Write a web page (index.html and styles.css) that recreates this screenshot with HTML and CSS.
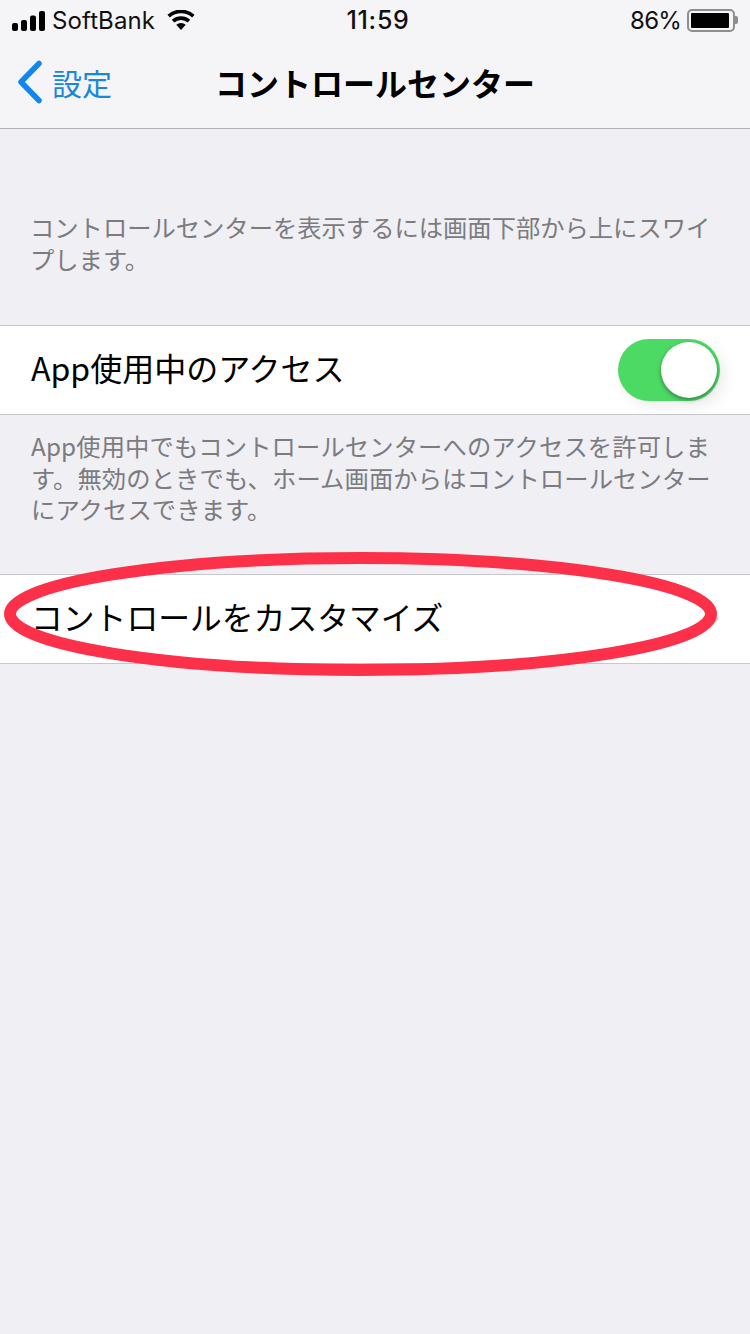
FILE: index.html
```html
<!DOCTYPE html>
<html lang="ja">
<head>
<meta charset="utf-8">
<title>コントロールセンター</title>
<link rel="stylesheet" href="styles.css">
</head>
<body>
<div class="screen">
  <header class="top">
    <div class="status">
      <div class="status-left">
        <svg class="signal" viewBox="0 0 34 20"><rect x="0" y="12" width="6" height="8" rx="2"/><rect x="9" y="9" width="6" height="11" rx="2"/><rect x="18" y="4.500" width="6" height="15.500" rx="2"/><rect x="27" y="0" width="6" height="20" rx="2"/></svg>
        <span class="carrier">SoftBank</span>
        <svg class="wifi" viewBox="0 0 28 20"><path d="M14 20l-4.700-5.300a7 7 0 0 1 9.400 0z"/><path d="M7.300 12.500l-2.500-2.800a14 14 0 0 1 18.400 0l-2.500 2.800a10.200 10.200 0 0 0-13.400 0z"/><path d="M2.900 7.500L.4 4.700a20.600 20.600 0 0 1 27.200 0l-2.500 2.800a16.800 16.800 0 0 0-22.200 0z"/></svg>
      </div>
      <div class="time">11:59</div>
      <div class="status-right">
        <span class="pct">86%</span>
        <span class="battery"><span class="battery-fill"></span></span>
        <span class="battery-cap"></span>
      </div>
    </div>
    <nav class="nav">
      <div class="back">
        <svg class="chevron" viewBox="0 0 26 44"><path d="M22 3.500L4 22 22 40.500" /></svg>
        <span>設定</span>
      </div>
      <h1 class="title">コントロールセンター</h1>
    </nav>
  </header>

  <main class="content">
    <p class="note note-first">コントロールセンターを表示するには画面下部から上にスワイプします。</p>
    <div class="row row-toggle">
      <span class="label">App使用中のアクセス</span>
      <span class="switch"><span class="knob"></span></span>
    </div>
    <p class="note note-second">App使用中でもコントロールセンターへのアクセスを許可します。無効のときでも、ホーム画面からはコントロールセンターにアクセスできます。</p>
    <div class="row row-link">
      <span class="label label-link">コントロールをカスタマイズ</span>
      <svg class="disclosure" viewBox="0 0 12 20"><path d="M2 2l8 8-8 8"/></svg>
      <svg class="circle" viewBox="0 0 750 140"><ellipse cx="360.500" cy="70" rx="350.500" ry="56"/></svg>
    </div>
  </main>
</div>
</body>
</html>
```
FILE: styles.css
```css
* { box-sizing: border-box; }
html, body { margin: 0; padding: 0; }
body {
  width: 750px;
  height: 1334px;
  overflow: hidden;
  background: #efeff4;
  font-family: "Noto Sans CJK JP", "Liberation Sans", sans-serif;
  color: #000;
}
.screen { width: 750px; height: 1334px; background: #efeff4; }

.top {
  height: 129px;
  background: #f5f5f8;
  border-bottom: 1px solid #b2b2b6;
}
.status {
  height: 40px;
  display: flex;
  align-items: center;
  justify-content: space-between;
  padding: 0 12px 0 12px;
}
.status-left { display: flex; align-items: center; width: 250px; }
.signal { width: 34px; height: 20px; fill: #000; margin-top: 2px; }
.carrier {
  font-family: "Inter", "Liberation Sans", sans-serif;
  font-size: 24px;
  letter-spacing: .1px;
  margin-left: 6px;
  color: #111;
}
.wifi { width: 28px; height: 20px; fill: #000; margin-left: 12px; margin-top: -1px; }
.time {
  font-family: "Inter", "Liberation Sans", sans-serif;
  font-size: 25px;
  font-weight: 500;
  letter-spacing: .7px;
  color: #111;
  padding-left: 6px;
}
.status-right { display: flex; align-items: center; width: 250px; justify-content: flex-end; }
.pct {
  font-family: "Inter", "Liberation Sans", sans-serif;
  font-size: 24px;
  letter-spacing: -.8px;
  margin-right: 6px;
  color: #111;
}
.battery {
  width: 48px;
  height: 23px;
  border: 2px solid #8e8e8e;
  border-radius: 5px;
  padding: 2px;
  display: flex;
}
.battery-fill { width: 38px; background: #000; border-radius: 1px; }
.battery-cap { width: 3px; height: 8px; background: #8e8e8e; border-radius: 0 2px 2px 0; }

.nav {
  height: 88px;
  display: flex;
  align-items: center;
  justify-content: center;
  position: relative;
}
.back {
  position: absolute;
  left: 17px;
  top: 20px;
  display: flex;
  align-items: center;
  color: #1a87dc;
  font-size: 30px;
  line-height: 44px;
}
.chevron { width: 26px; height: 44px; fill: none; stroke: #1185f0; stroke-width: 5.500px; stroke-linecap: round; stroke-linejoin: round; margin-right: 9px; }
.title {
  margin: 0;
  padding-bottom: 4px;
  font-size: 32px;
  font-weight: 700;
  line-height: 44px;
  color: #000;
}

.content { display: flex; flex-direction: column; }
.note {
  margin: 0;
  padding: 0 30px;
  font-size: 24.300px;
  line-height: 32px;
  color: #7b7b80;
}
.note-first { padding-top: 82px; height: 196px; }
.note-second { padding: 15px 30px 0 31px; height: 159px; line-height: 31.500px; letter-spacing: .12px; }
.row {
  height: 90px;
  background: #fff;
  border-top: 1px solid #c8c7cc;
  border-bottom: 1px solid #c8c7cc;
  display: flex;
  align-items: center;
  justify-content: space-between;
  padding: 0 30px 0 31px;
  position: relative;
}
.label { font-size: 32px; line-height: 44px; padding-bottom: 6px; color: #000; }
.label-link { font-size: 31.800px; }
.switch {
  width: 102px;
  height: 62px;
  border-radius: 31px;
  background: #4cd964;
  display: flex;
  align-items: center;
  justify-content: flex-end;
  padding-right: 3px;
  box-shadow: 6px 6px 14px rgba(0,0,0,.07);
}
.knob {
  width: 56px;
  height: 56px;
  border-radius: 50%;
  background: #fff;
  box-shadow: 0 2px 4px rgba(0,0,0,.4);
}
.disclosure { width: 12px; height: 20px; fill: none; stroke: #c7c7cc; stroke-width: 3px; margin-right: 1px; }
.circle {
  position: absolute;
  left: 0;
  top: -31px;
  width: 750px;
  height: 140px;
  overflow: visible;
  pointer-events: none;
}
.circle ellipse { fill: none; stroke: #fd3049; stroke-width: 12px; }
```
